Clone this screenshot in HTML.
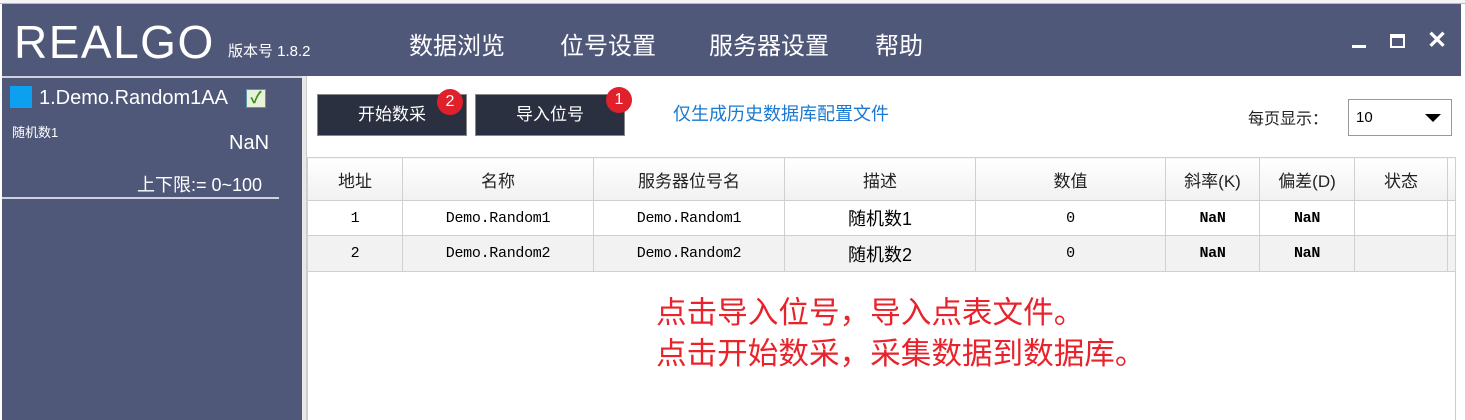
<!DOCTYPE html>
<html><head><meta charset="utf-8"><style>
*{margin:0;padding:0;box-sizing:border-box}
body{width:1465px;height:420px;overflow:hidden;background:#fff;position:relative;font-family:"Liberation Sans","Noto Sans CJK SC",sans-serif}
.a{position:absolute;white-space:nowrap}
.win{position:absolute;left:2px;top:4px;width:1459px;height:416px;background:#fff;border-left:1px solid #777}
.title{position:absolute;left:2px;top:4px;width:1459px;height:72px;background:#50587a}
.side{position:absolute;left:2px;top:76px;width:300px;height:344px;background:#50587a;border-top:2px solid #d0d3dd}
.w{color:#fff}
.btn{position:absolute;top:94px;height:42px;background:#2b3040;border:1px solid #888;color:#fff;font-size:17px;text-align:center;line-height:40px}
.badge{position:absolute;width:26px;height:26px;border-radius:13px;background:#e0202a;color:#fff;font-size:16px;text-align:center;line-height:26px}
table{position:absolute;left:307px;top:157px;border-collapse:collapse;font-size:17px}
td{border:1px solid #d0d0d0;text-align:center;padding:0}
tr.h td{height:43px;background:linear-gradient(#fff,#f1f1f1);color:#222}
tr.r1 td{height:35px;background:#fff}
tr.r2 td{height:36px;background:#f2f2f2}
.m{font-family:"Liberation Mono","Noto Sans CJK SC",monospace;font-size:15px;letter-spacing:-0.3px}
.red{color:#e8232b;font-size:30.6px;font-family:"Liberation Sans","Noto Sans CJK SC",sans-serif}
</style></head><body>
<div class="win"></div>
<div class="a" style="left:0;top:0;width:1465px;height:4px;background:#f4f4f4;border-bottom:1px solid #bbb"></div>
<div class="title"></div>
<div class="a w" style="left:14px;top:18px;font-size:46px;letter-spacing:1.5px;line-height:48px">REALGO</div>
<div class="a w" style="left:228px;top:40px;font-size:15px">版本号 1.8.2</div>
<div class="a w" style="left:409px;top:26px;font-size:24px">数据浏览</div>
<div class="a w" style="left:560px;top:26px;font-size:24px">位号设置</div>
<div class="a w" style="left:709px;top:26px;font-size:24px">服务器设置</div>
<div class="a w" style="left:875px;top:26px;font-size:24px">帮助</div>
<div class="a" style="left:1352px;top:45px;width:14px;height:3px;background:#fff"></div>
<div class="a" style="left:1390px;top:34px;width:15px;height:14px;border:2px solid #fff;border-top-width:4px"></div>
<div class="a w" style="left:1427px;top:26px;font-size:24px;font-weight:bold">✕</div>
<div class="side"></div>
<div class="a" style="left:10px;top:86px;width:22px;height:22px;background:#0ea0f0"></div>
<div class="a w" style="left:39px;top:87px;font-size:20px">1.Demo.Random1AA</div>
<div class="a" style="left:246px;top:89px;width:20px;height:19px;background:#e8f2d8;border:1px solid #59a;color:#3a9020;font-size:16px;line-height:17px;text-align:center;font-weight:bold">✓</div>
<div class="a w" style="left:12px;top:122px;font-size:13px">随机数1</div>
<div class="a w" style="left:229px;top:132px;font-size:20px">NaN</div>
<div class="a w" style="left:137px;top:171px;font-size:18px">上下限:= 0~100</div>
<div class="a" style="left:2px;top:197px;width:277px;height:2px;background:#d0d3dd"></div>
<div class="a" style="left:302px;top:76px;width:5px;height:344px;background:#e8e8e8;border-right:1px solid #ccc"></div>
<div class="btn" style="left:317px;width:150px">开始数采</div>
<div class="badge" style="left:437px;top:89px">2</div>
<div class="btn" style="left:475px;width:150px">导入位号</div>
<div class="badge" style="left:606px;top:87px">1</div>
<div class="a" style="left:673px;top:100px;font-size:18px;color:#1a78d0">仅生成历史数据库配置文件</div>
<div class="a" style="left:1248px;top:105px;font-size:16px;color:#222">每页显示：</div>
<div class="a" style="left:1348px;top:99px;width:104px;height:37px;border:1px solid #999;background:#fff;font-size:15px;line-height:35px;padding-left:7px">10<span style="position:absolute;right:10px;top:14px;width:0;height:0;border-left:8px solid transparent;border-right:8px solid transparent;border-top:8px solid #000"></span></div>
<div class="a" style="left:307px;top:157px;width:1149px;height:263px;border:1px solid #ccc;border-bottom:none"></div>
<table>
<colgroup><col style="width:95px"><col style="width:191px"><col style="width:191px"><col style="width:191px"><col style="width:190px"><col style="width:94px"><col style="width:95px"><col style="width:93px"><col style="width:8px"></colgroup>
<tr class="h"><td>地址</td><td>名称</td><td>服务器位号名</td><td>描述</td><td>数值</td><td>斜率(K)</td><td>偏差(D)</td><td>状态</td><td></td></tr>
<tr class="r1"><td class="m">1</td><td class="m">Demo.Random1</td><td class="m">Demo.Random1</td><td style="font-size:18px">随机数1</td><td class="m">0</td><td class="m" style="font-weight:bold">NaN</td><td class="m" style="font-weight:bold">NaN</td><td></td><td></td></tr>
<tr class="r2"><td class="m">2</td><td class="m">Demo.Random2</td><td class="m">Demo.Random2</td><td style="font-size:18px">随机数2</td><td class="m">0</td><td class="m" style="font-weight:bold">NaN</td><td class="m" style="font-weight:bold">NaN</td><td></td><td></td></tr>
</table>
<div class="a red" style="left:656px;top:288px">点击导入位号，导入点表文件。</div>
<div class="a red" style="left:656px;top:329px">点击开始数采，采集数据到数据库。</div>
</body></html>
